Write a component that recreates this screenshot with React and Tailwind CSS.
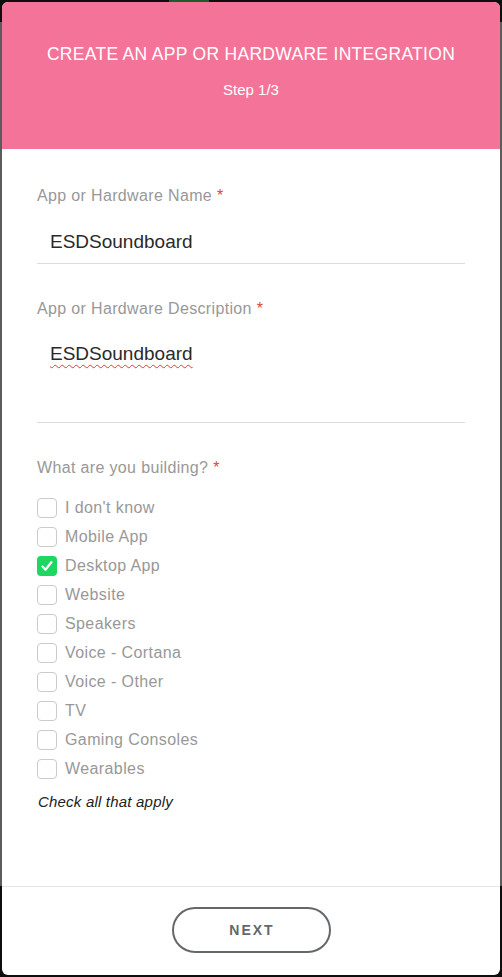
import React from 'react';

const options = [
  { label: "I don't know", checked: false },
  { label: 'Mobile App', checked: false },
  { label: 'Desktop App', checked: true },
  { label: 'Website', checked: false },
  { label: 'Speakers', checked: false },
  { label: 'Voice - Cortana', checked: false },
  { label: 'Voice - Other', checked: false },
  { label: 'TV', checked: false },
  { label: 'Gaming Consoles', checked: false },
  { label: 'Wearables', checked: false },
];

const Label = ({ children }) => (
  <div className="text-[16px] leading-[20px] tracking-[0.35px] text-[#989898]">
    {children} <span className="text-[#e2453c]">*</span>
  </div>
);

const Checkbox = ({ checked }) =>
  checked ? (
    <span className="flex h-[20px] w-[20px] items-center justify-center rounded-[4px] bg-[#1ed760]">
      <svg width="14" height="14" viewBox="0 0 14 14" fill="none">
        <path d="M2.5 7.5l3 3.2L11.5 3" stroke="#fff" strokeWidth="2.2" strokeLinecap="round" strokeLinejoin="round" />
      </svg>
    </span>
  ) : (
    <span className="block h-[20px] w-[20px] rounded-[4px] border border-[#cbcbcb] bg-white" />
  );

export default function App() {
  return (
    <div className="flex h-[977px] w-[502px] flex-col bg-[linear-gradient(to_bottom,#0e0e0e_0,#0e0e0e_22px,#5c5c5c_22px,#5c5c5c_886px,#0e0e0e_886px)] font-['Liberation_Sans',Arial,sans-serif]">
      <div className="h-[2px] shrink-0 bg-[#0e0e0e]">
        <div className="ml-[169px] h-[2px] w-[40px] bg-[#1c5a2f]" />
      </div>

      <div className="mx-[2px] flex h-[973px] flex-col overflow-hidden rounded-[6px] bg-white">
        <header className="flex h-[147px] shrink-0 flex-col items-center bg-[#f47399] text-white">
          <h1 className="mt-[40px] text-[17.5px] leading-[24px] tracking-[0.3px]">
            CREATE AN APP OR HARDWARE INTEGRATION
          </h1>
          <p className="mt-[14px] text-[15px] leading-[20px]">Step 1/3</p>
        </header>

        <div className="flex-1 px-[35px] pt-[37px]">
          <Label>App or Hardware Name</Label>
          <input
            readOnly
            value="ESDSoundboard"
            className="mt-[24px] box-border block h-[34px] w-full border-b border-[#dcdcdc] pb-[10px] pl-[13px] text-[19px] leading-[24px] text-[#2a2a2a] outline-none"
          />

          <div className="mt-[35px]">
            <Label>App or Hardware Description</Label>
          </div>
          <div className="mt-[23px] h-[81px] border-b border-[#dcdcdc] pl-[13px] text-[19px] leading-[24px] text-[#2a2a2a]">
            <span className="underline decoration-[#e53935] decoration-wavy decoration-1 underline-offset-[4px]">
              ESDSoundboard
            </span>
          </div>

          <div className="mt-[35px]">
            <Label>What are you building?</Label>
          </div>
          <ul className="mt-[15px]">
            {options.map((o) => (
              <li key={o.label} className="flex h-[29px] items-center gap-[8px]">
                <Checkbox checked={o.checked} />
                <span className="text-[16px] tracking-[0.4px] text-[#989898]">{o.label}</span>
              </li>
            ))}
          </ul>
          <p className="mt-[9px] pl-[1px] text-[15px] italic leading-[20px] tracking-[0.2px] text-[#222]">
            Check all that apply
          </p>
        </div>

        <footer className="flex shrink-0 justify-center border-t border-[#e6e6e6] pb-[22px] pt-[20px]">
          <button className="h-[46px] w-[159px] rounded-full border-2 border-[#64686c] pl-[2px] text-[14px] font-bold tracking-[2px] text-[#64686c]">
            NEXT
          </button>
        </footer>
      </div>
    </div>
  );
}
